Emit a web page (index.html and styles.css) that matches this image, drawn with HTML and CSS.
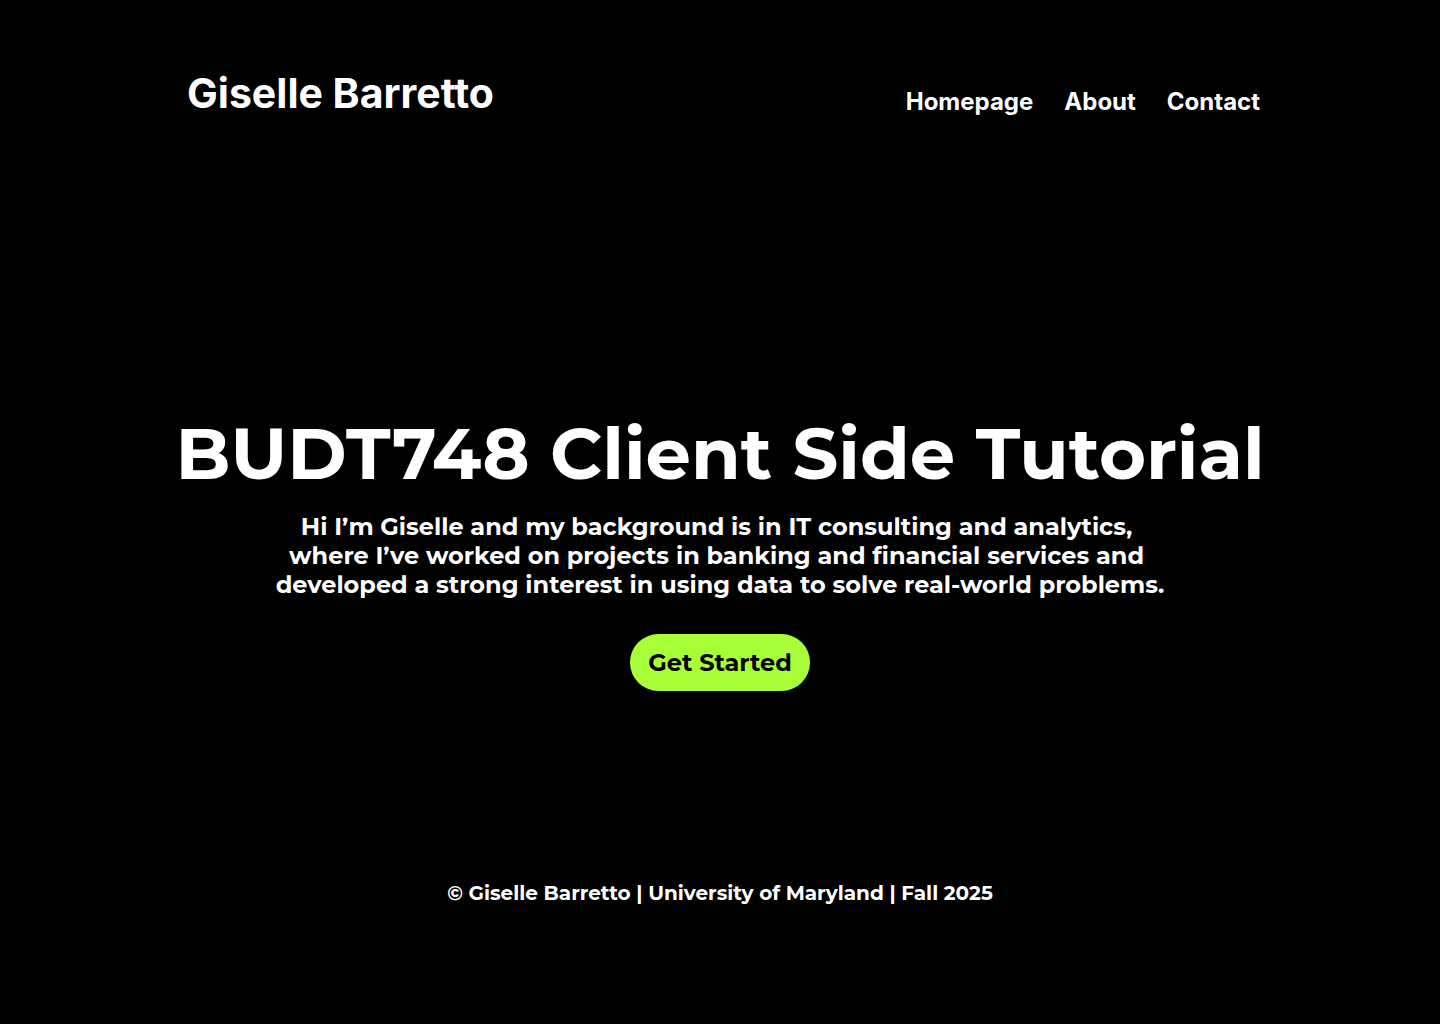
FILE: index.html
```html
<!DOCTYPE html>
<html lang="en">
<head>
<meta charset="utf-8">
<meta name="viewport" content="width=device-width, initial-scale=1">
<title>Giselle Barretto</title>
<link rel="stylesheet" href="styles.css">
</head>
<body>
<header class="site-header">
  <a class="brand" href="#">Giselle Barretto</a>
  <nav class="site-nav">
    <a href="#">Homepage</a>
    <a href="#about">About</a>
    <a href="#contact">Contact</a>
  </nav>
</header>
<main class="hero">
  <h1 class="hero-title">BUDT748 Client Side Tutorial</h1>
  <p class="hero-text">Hi I’m Giselle and my background is in IT consulting and analytics,&nbsp;<br>where I’ve worked on projects in banking and financial services and&nbsp;<br>developed a strong interest in using data to solve real-world problems.</p>
  <button class="cta" type="button">Get Started</button>
</main>
<footer class="site-footer">© Giselle Barretto | University of Maryland | Fall 2025</footer>
</body>
</html>
```
FILE: styles.css
```css
* {
  box-sizing: border-box;
}

body {
  margin: 0;
  min-height: 100vh;
  display: flex;
  flex-direction: column;
  background: #000;
  color: #fff;
  font-family: Montserrat, Inter, sans-serif;
  font-weight: 700;
}

a {
  color: inherit;
  text-decoration: none;
}

.site-header {
  display: flex;
  flex-wrap: wrap;
  align-items: flex-end;
  justify-content: space-between;
  padding: 69px 180px 0 187px;
  font-family: Inter, sans-serif;
}

.brand {
  font-size: 41px;
  line-height: 48px;
}

.site-nav {
  display: flex;
  gap: 31px;
  font-size: 24px;
  line-height: 30px;
}

.hero {
  flex: 1;
  display: flex;
  flex-direction: column;
  align-items: center;
  padding: 292px 24px 0;
  text-align: center;
}

.hero-title {
  margin: 0;
  font-size: 72px;
  line-height: 88px;
}

.hero-text {
  margin: 15px 0 0;
  font-size: 24px;
  line-height: 29px;
}

.cta {
  margin-top: 35px;
  padding: 14px 18px;
  border: 0;
  border-radius: 29px;
  background: #a9ff37;
  color: #000;
  font: inherit;
  font-size: 24px;
  line-height: 29px;
}

.site-footer {
  padding: 24px 24px 119px;
  font-size: 20px;
  line-height: 24px;
  text-align: center;
}
```
